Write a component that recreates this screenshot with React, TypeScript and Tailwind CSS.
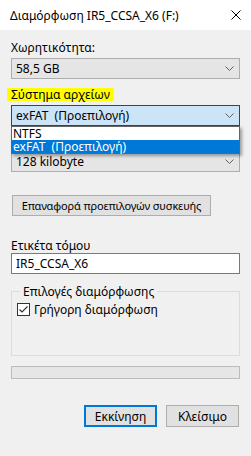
import React from "react";

const font = { fontFamily: '"Segoe UI", "Noto Sans", "Liberation Sans", sans-serif' };

function Chevron() {
  return (
    <svg width="9" height="5" viewBox="0 0 9 5" className="shrink-0">
      <polyline points="0.5,0.5 4.5,4.5 8.5,0.5" fill="none" stroke="#606060" strokeWidth="1" />
    </svg>
  );
}

function Combo({ value, focused }: { value: string; focused?: boolean }) {
  return (
    <div
      className={
        focused
          ? "h-[21px] w-[229px] flex items-center justify-between pl-[4px] pr-[5px] border border-[#005499] bg-[#cce4f7]"
          : "h-[21px] w-[229px] flex items-center justify-between pl-[4px] pr-[5px] border border-[#adadad] bg-[#e5e5e5]"
      }
    >
      <span className="whitespace-pre">{value}</span>
      <Chevron />
    </div>
  );
}

export default function App() {
  return (
    <div
      className="w-[251px] h-[456px] bg-[#f0f0f0] text-[12px] leading-[15px] text-black overflow-hidden flex flex-col"
      style={font}
    >
      <div className="h-[30px] bg-white flex items-center justify-between pl-[10px] pr-[10px] shrink-0">
        <span>Διαμόρφωση IR5_CCSA_X6 (F:)</span>
        <svg width="10" height="10" viewBox="0 0 10 10">
          <path d="M0.5 0.5 L9.5 9.5 M9.5 0.5 L0.5 9.5" stroke="#000" strokeWidth="1" />
        </svg>
      </div>

      <div className="px-[11px] flex flex-col">
        <div className="mt-[10px]">Χωρητικότητα:</div>
        <div className="mt-[3px]">
          <Combo value="58,5 GB" />
        </div>

        <div className="mt-[9px] h-[13px] flex">
          <span className="-ml-[4px] pl-[4px] pr-[4px] bg-[#ffff00] h-[13px] leading-[13px]">Σύστημα αρχείων</span>
        </div>

        <div className="relative mt-[4px]">
          <Combo value="exFAT  (Προεπιλογή)" focused />
          {/* allocation size label sits under the open list */}
          <div className="h-[25px]" />
          <Combo value="128 kilobyte" />

          <div className="absolute left-0 top-[21px] w-[229px] border border-[#646464] bg-white shadow-[2px_2px_3px_rgba(0,0,0,0.35)] flex flex-col">
            <div className="h-[13px] leading-[13px] pl-[1px]">NTFS</div>
            <div className="h-[13px] leading-[13px] pl-[1px] bg-[#0078d7] text-white whitespace-pre">exFAT  (Προεπιλογή)</div>
          </div>
        </div>

        <div className="mt-[23px] ml-[1px]">
          <div className="h-[21px] w-[199px] border border-[#adadad] bg-[#e1e1e1] flex items-center justify-center whitespace-nowrap text-[11px] tracking-[-0.15px]">
            Επαναφορά προεπιλογών συσκευής
          </div>
        </div>

        <div className="mt-[22px]">Ετικέτα τόμου</div>
        <div className="h-[21px] w-[229px] border border-[#7a7a7a] bg-white flex items-center pl-[4px]">
          IR5_CCSA_X6
        </div>

        <fieldset className="mt-[11px] w-[229px] h-[71px] border border-[#dcdcdc] px-[5px]">
          <legend className="ml-[3px] px-[3px] h-[13px] leading-[13px]">Επιλογές διαμόρφωσης</legend>
          <div className="mt-[4px] flex items-center gap-[4px]">
            <svg width="13" height="13" viewBox="0 0 13 13" className="shrink-0">
              <rect x="0.5" y="0.5" width="12" height="12" fill="#fff" stroke="#333" />
              <polyline points="2.5,6.5 5,9 10.5,3.5" fill="none" stroke="#333" strokeWidth="1.2" />
            </svg>
            <span>Γρήγορη διαμόρφωση</span>
          </div>
        </fieldset>

        <div className="mt-[10px] h-[13px] w-[229px] border border-[#bcbcbc] bg-[#e6e6e6]" />

        <div className="mt-[26px] flex justify-end gap-[9px] pr-[1px]">
          <div className="h-[22px] w-[73px] border-2 border-[#0078d7] bg-[#e1e1e1] flex items-center justify-center">
            Εκκίνηση
          </div>
          <div className="h-[22px] w-[73px] border border-[#adadad] bg-[#e1e1e1] flex items-center justify-center">
            Κλείσιμο
          </div>
        </div>
      </div>
    </div>
  );
}
